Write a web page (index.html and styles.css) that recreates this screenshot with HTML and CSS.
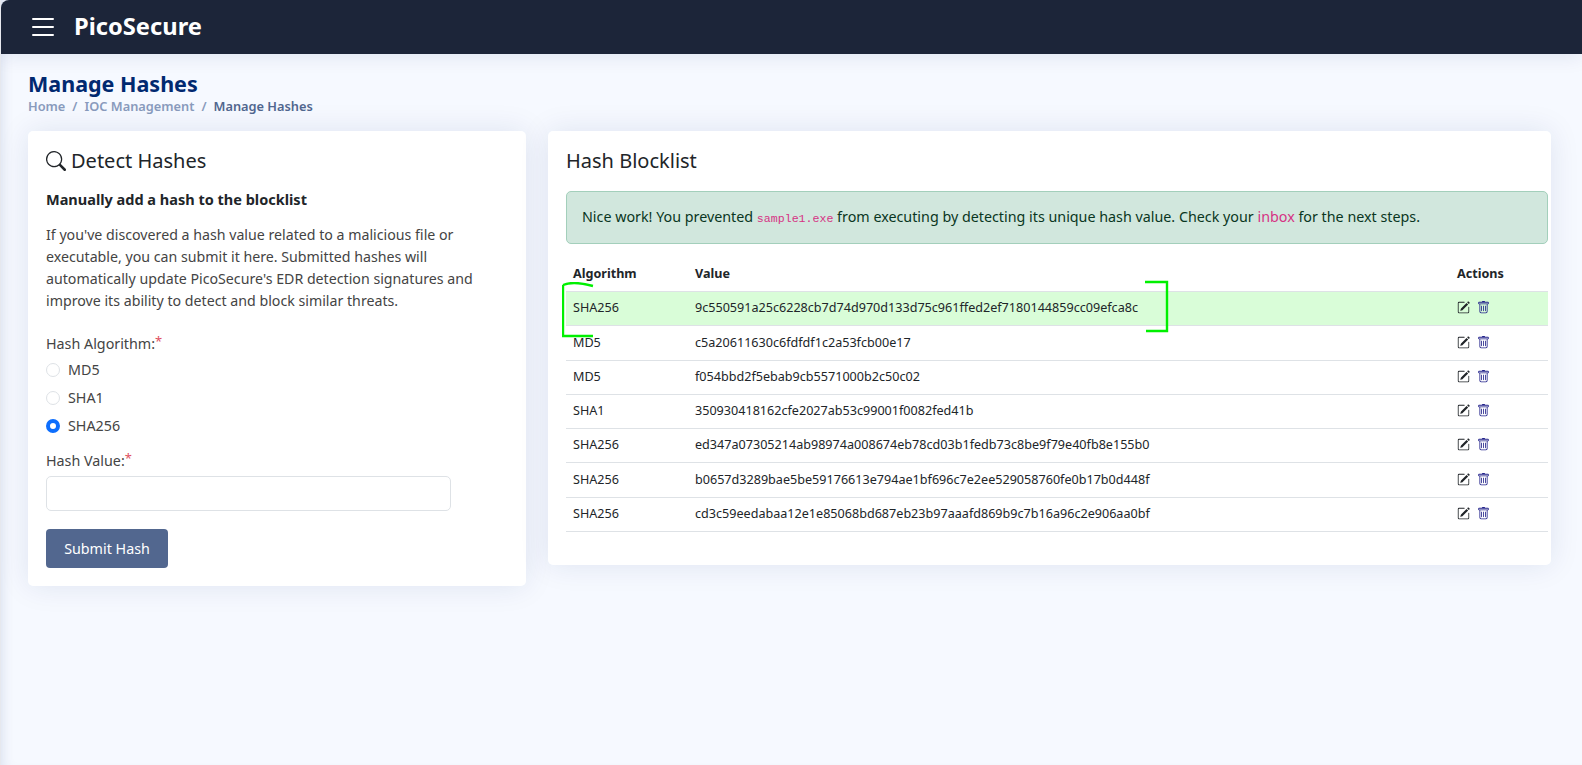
FILE: index.html
```html
<!DOCTYPE html>
<html lang="en">
<head>
    <meta charset="UTF-8">
    <meta name="viewport" content="width=device-width, initial-scale=1.0">
    <title>Manage Hashes</title>
    <link rel="stylesheet" href="styles.css">
</head>
<body>

    <nav class="navbar">
        <svg class="menu-icon" viewBox="0 0 16 16" fill="currentColor"><path fill-rule="evenodd" d="M2.5 12a.5.5 0 0 1 .5-.5h10a.5.5 0 0 1 0 1H3a.5.5 0 0 1-.5-.5zm0-4a.5.5 0 0 1 .5-.5h10a.5.5 0 0 1 0 1H3a.5.5 0 0 1-.5-.5zm0-4a.5.5 0 0 1 .5-.5h10a.5.5 0 0 1 0 1H3a.5.5 0 0 1-.5-.5z"/></svg>
        <span class="brand">PicoSecure</span>
    </nav>

    <main class="page">
        <div class="page-title">
            <h1>Manage Hashes</h1>
            <ol class="breadcrumb">
                <li>Home</li>
                <li class="sep">/</li>
                <li>IOC Management</li>
                <li class="sep">/</li>
                <li class="active">Manage Hashes</li>
            </ol>
        </div>

        <div class="columns">
            <!-- Add hash form -->
            <section class="card card-form">
                <h2 class="card-title">
                    <svg class="search-icon" viewBox="0 0 16 16" fill="currentColor"><path d="M11.742 10.344a6.5 6.5 0 1 0-1.397 1.398h-.001c.03.04.062.078.098.115l3.85 3.85a1 1 0 0 0 1.415-1.414l-3.85-3.85a1.007 1.007 0 0 0-.115-.1zM12 6.5a5.5 5.5 0 1 1-11 0 5.5 5.5 0 0 1 11 0z"/></svg>
                    Detect Hashes
                </h2>
                <p class="lead">Manually add a hash to the blocklist</p>
                <p class="intro">If you've discovered a hash value related to a malicious file or executable, you can submit it here. Submitted hashes will automatically update PicoSecure's EDR detection signatures and improve its ability to detect and block similar threats.</p>

                <form>
                    <div class="field-label">Hash Algorithm:<span class="required">*</span></div>
                    <div class="radio-group">
                        <label class="radio"><input type="radio" name="algo"> MD5</label>
                        <label class="radio"><input type="radio" name="algo"> SHA1</label>
                        <label class="radio"><input type="radio" name="algo" checked> SHA256</label>
                    </div>
                    <label class="field-label" for="hashValue">Hash Value:<span class="required">*</span></label>
                    <input class="text-input" type="text" id="hashValue">
                    <button class="btn" type="button">Submit Hash</button>
                </form>
            </section>

            <!-- Blocklist table -->
            <section class="card card-table">
                <h2 class="card-title">Hash Blocklist</h2>
                <div class="alert">Nice work! You prevented <code>sample1.exe</code> from executing by detecting its unique hash value. Check your <a href="#">inbox</a> for the next steps.</div>

                <div class="table-wrap">
                    <table>
                        <thead>
                            <tr><th class="col-algo">Algorithm</th><th>Value</th><th class="col-actions">Actions</th></tr>
                        </thead>
                        <tbody id="hashRows"></tbody>
                    </table>

                    <!-- Hand drawn marks on top of the first row -->
                    <svg class="mark mark-left" viewBox="0 0 32 56" fill="none" stroke="#00f000" stroke-width="2.4"><path d="M1 3C8 0 20 1 31 4"/><path d="M1 3V54H31"/></svg>
                    <svg class="mark mark-right" viewBox="0 0 25 53" fill="none" stroke="#00f000" stroke-width="2.4"><path d="M1 2H23V51H2"/></svg>
                </div>
            </section>
        </div>
    </main>

    <script src="rows.js"></script>
</body>
</html>
```

FILE: rows.js
```js
const hashes = [
    ["SHA256", "9c550591a25c6228cb7d74d970d133d75c961ffed2ef7180144859cc09efca8c"],
    ["MD5", "c5a20611630c6fdfdf1c2a53fcb00e17"],
    ["MD5", "f054bbd2f5ebab9cb5571000b2c50c02"],
    ["SHA1", "350930418162cfe2027ab53c99001f0082fed41b"],
    ["SHA256", "ed347a07305214ab98974a008674eb78cd03b1fedb73c8be9f79e40fb8e155b0"],
    ["SHA256", "b0657d3289bae5be59176613e794ae1bf696c7e2ee529058760fe0b17b0d448f"],
    ["SHA256", "cd3c59eedabaa12e1e85068bd687eb23b97aaafd869b9c7b16a96c2e906aa0bf"]
];

const editIcon = '<svg class="icon icon-edit" viewBox="0 0 16 16" fill="currentColor"><path d="M15.502 1.94a.5.5 0 0 1 0 .706L14.459 3.69l-2-2L13.502.646a.5.5 0 0 1 .707 0l1.293 1.293zm-1.75 2.456-2-2L4.939 9.21a.5.5 0 0 0-.121.196l-.805 2.414a.25.25 0 0 0 .316.316l2.414-.805a.5.5 0 0 0 .196-.12l6.813-6.814z"/><path fill-rule="evenodd" d="M1 13.5A1.5 1.5 0 0 0 2.5 15h11a1.5 1.5 0 0 0 1.5-1.5v-6a.5.5 0 0 0-1 0v6a.5.5 0 0 1-.5.5h-11a.5.5 0 0 1-.5-.5v-11a.5.5 0 0 1 .5-.5H9a.5.5 0 0 0 0-1H2.5A1.5 1.5 0 0 0 1 2.5v11z"/></svg>';
const trashIcon = '<svg class="icon icon-trash" viewBox="0 0 16 16" fill="currentColor"><path d="M5.5 5.5A.5.5 0 0 1 6 6v6a.5.5 0 0 1-1 0V6a.5.5 0 0 1 .5-.5zm2.5 0a.5.5 0 0 1 .5.5v6a.5.5 0 0 1-1 0V6a.5.5 0 0 1 .5-.5zm3 .5a.5.5 0 0 0-1 0v6a.5.5 0 0 0 1 0V6z"/><path fill-rule="evenodd" d="M14.5 3a1 1 0 0 1-1 1H13v9a2 2 0 0 1-2 2H5a2 2 0 0 1-2-2V4h-.5a1 1 0 0 1-1-1V2a1 1 0 0 1 1-1H6a1 1 0 0 1 1-1h2a1 1 0 0 1 1 1h3.5a1 1 0 0 1 1 1v1zM4.118 4 4 4.059V13a1 1 0 0 0 1 1h6a1 1 0 0 0 1-1V4.059L11.882 4H4.118zM2.5 3V2h11v1h-11z"/></svg>';

const tbody = document.getElementById('hashRows');
hashes.forEach(function(row, i) {
    const tr = document.createElement('tr');
    if (i === 0) tr.className = 'row-new';
    tr.innerHTML = '<td>' + row[0] + '</td><td>' + row[1] + '</td><td class="col-actions">' + editIcon + trashIcon + '</td>';
    tbody.appendChild(tr);
});
```

FILE: styles.css
```css
/* General body styling */
body {
    font-family: 'Noto Sans', 'Open Sans', sans-serif;
    font-size: 14.3px;
    line-height: 1.5;
    margin: 0;
    height: 765px;
    overflow: hidden;
    background-color: #f6f9ff;
    color: #212529;
    border-left: 1px solid #e6e8ee;
    box-sizing: border-box;
    box-shadow: inset 10px 0 14px -10px rgba(1, 41, 112, 0.14);
}

/* Top bar */
.navbar {
    height: 54px;
    background-color: #1c2539;
    border-top-left-radius: 8px;
    color: white;
    display: flex;
    align-items: center;
    padding-left: 26px;
    box-shadow: 0 2px 20px rgba(1, 41, 112, 0.1);
}

.menu-icon {
    width: 32px;
    height: 32px;
}

.brand {
    font-size: 23.7px;
    font-weight: 700;
    margin-left: 15px;
}

/* Page content */
.page {
    padding: 17px 31px 0 27px;
}

.page-title h1 {
    margin: 0;
    font-size: 21.5px;
    line-height: 26px;
    font-weight: 700;
    color: #012970;
}

.breadcrumb {
    display: flex;
    gap: 7px;
    list-style: none;
    margin: 0 0 16px;
    padding: 0;
    font-size: 12.8px;
    line-height: 18px;
    font-weight: 600;
    color: #899bbd;
}

.breadcrumb .active {
    color: #51678f;
}

.columns {
    display: grid;
    grid-template-columns: 498px 1fr;
    gap: 22px;
    align-items: start;
}

/* Cards */
.card {
    background-color: white;
    border-radius: 5px;
    box-shadow: 0 0 30px rgba(1, 41, 112, 0.1);
    padding: 18px;
}

.card-table {
    padding-right: 3px;
}

.card-title {
    margin: 0 0 16px;
    font-size: 20px;
    line-height: 24px;
    font-weight: 400;
    color: #212529;
    display: flex;
    align-items: center;
    gap: 5px;
}

.card-table .card-title {
    margin-bottom: 18px;
}

.search-icon {
    width: 20px;
    height: 20px;
}

.lead {
    margin: 0 0 14px;
    font-size: 14.5px;
    line-height: 21px;
    font-weight: 700;
}

.intro {
    margin: 0 0 21px;
    font-size: 14.2px;
    line-height: 22px;
    color: #444444;
}

/* Form */
.field-label {
    display: block;
    color: #444444;
}

.required {
    color: #e0505f;
    font-size: 13px;
    position: relative;
    top: -3px;
}

.radio-group {
    margin: 1px 0 10px;
}

.radio {
    display: flex;
    align-items: center;
    gap: 8px;
    height: 28px;
    color: #444444;
}

.radio input {
    appearance: none;
    width: 14px;
    height: 14px;
    margin: 0;
    border: 1px solid #dee2e6;
    border-radius: 50%;
    background-color: white;
}

.radio input:checked {
    border: 4px solid #0d6efd;
}

.text-input {
    display: block;
    width: 405px;
    height: 35px;
    box-sizing: border-box;
    border: 1px solid #dee2e6;
    border-radius: 5px;
    margin: 5px 0 18px;
    background-color: white;
}

.btn {
    width: 122px;
    height: 39px;
    border: none;
    border-radius: 4px;
    background-color: #52678f;
    color: white;
    font-family: inherit;
    font-size: 14.3px;
}

/* Alert */
.alert {
    background-color: #d1e7dd;
    border: 1px solid #a3cfbb;
    border-radius: 5px;
    color: #0a3622;
    padding: 14px 15px;
    line-height: 21px;
    margin-bottom: 14px;
}

.alert code {
    font-family: 'Liberation Mono', monospace;
    font-size: 11.6px;
    color: #d63384;
}

.alert a {
    color: #d63384;
    text-decoration: none;
}

/* Table */
.table-wrap {
    position: relative;
    margin-bottom: 15px;
}

table {
    width: 100%;
    border-collapse: collapse;
    font-size: 12.6px;
}

th {
    text-align: left;
    font-weight: 700;
    padding: 0 7px;
    height: 33px;
    border-bottom: 1px solid #dee2e6;
}

td {
    padding: 0 7px;
    height: 33.3px;
    border-bottom: 1px solid #dee2e6;
}

.row-new td {
    background-color: #d9fdd8;
}

.col-algo {
    width: 108px;
}

.col-actions {
    width: 84px;
}

.icon {
    width: 13px;
    height: 13px;
    vertical-align: -2px;
}

.icon-edit {
    color: #212529;
    margin-right: 7px;
}

.icon-trash {
    color: #22228a;
}

/* Green marks drawn over the first row */
.mark {
    position: absolute;
}

.mark-left {
    left: -4px;
    top: 24px;
    width: 32px;
    height: 56px;
}

.mark-right {
    left: 578px;
    top: 22px;
    width: 25px;
    height: 53px;
}
```
